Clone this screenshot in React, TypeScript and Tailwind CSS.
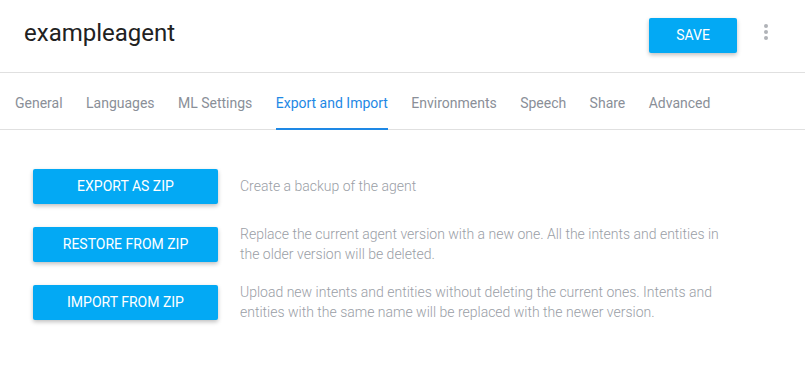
import React from "react";

const tabs = ["General", "Languages", "ML Settings", "Export and Import", "Environments", "Speech", "Share", "Advanced"];

const rows = [
  { label: "EXPORT AS ZIP", text: ["Create a backup of the agent"] },
  {
    label: "RESTORE FROM ZIP",
    text: ["Replace the current agent version with a new one. All the intents and entities in", "the older version will be deleted."],
  },
  {
    label: "IMPORT FROM ZIP",
    text: ["Upload new intents and entities without deleting the current ones. Intents and", "entities with the same name will be replaced with the newer version."],
  },
];

export default function App() {
  return (
    <div className="w-[805px] h-[386px] bg-white font-['Roboto',sans-serif] overflow-hidden">
      <div className="h-[73px] flex items-center border-b border-[#e0e0e0] pl-[24px] pr-[37px]">
        <div className="flex-1 text-[24px] text-[#212121] leading-none -mt-[6px]">exampleagent</div>
        <button className="w-[88px] h-[35px] bg-[#03a9f4] text-white text-[14px] rounded-[2px] shadow-[0_2px_4px_rgba(0,0,0,0.25)] -mt-[2px]">SAVE</button>
        <div className="ml-[27px] -mt-[8px] flex flex-col gap-[2px] items-center">
          <span className="w-[4px] h-[4px] rounded-full bg-[#b0b3b8]" />
          <span className="w-[4px] h-[4px] rounded-full bg-[#b0b3b8]" />
          <span className="w-[4px] h-[4px] rounded-full bg-[#b0b3b8]" />
        </div>
      </div>
      <div className="h-[57px] flex items-stretch border-b border-[#e0e0e0] pl-[15px] gap-[23.4px]">
        {tabs.map((t) => (
          <div
            key={t}
            className={
              "flex items-center pt-[5px] text-[14px] -mb-[1px] border-b-2 " +
              (t === "Export and Import" ? "text-[#1e88e5] border-[#1e88e5]" : "text-[#8a8f98] border-transparent")
            }
          >
            {t}
          </div>
        ))}
      </div>
      <div className="pt-[36px] pl-[33px] flex flex-col gap-[18px]">
        {rows.map((r) => (
          <div key={r.label} className="flex items-center h-[40px]">
            <button className="w-[185px] h-[35px] shrink-0 bg-[#03a9f4] text-white text-[14px] rounded-[2px] shadow-[0_2px_4px_rgba(0,0,0,0.25)]">
              {r.label}
            </button>
            <div className="ml-[22px] text-[14px] font-light leading-[20px] text-[#9a9ea6]">
              {r.text.map((l) => (
                <div key={l}>{l}</div>
              ))}
            </div>
          </div>
        ))}
      </div>
    </div>
  );
}
